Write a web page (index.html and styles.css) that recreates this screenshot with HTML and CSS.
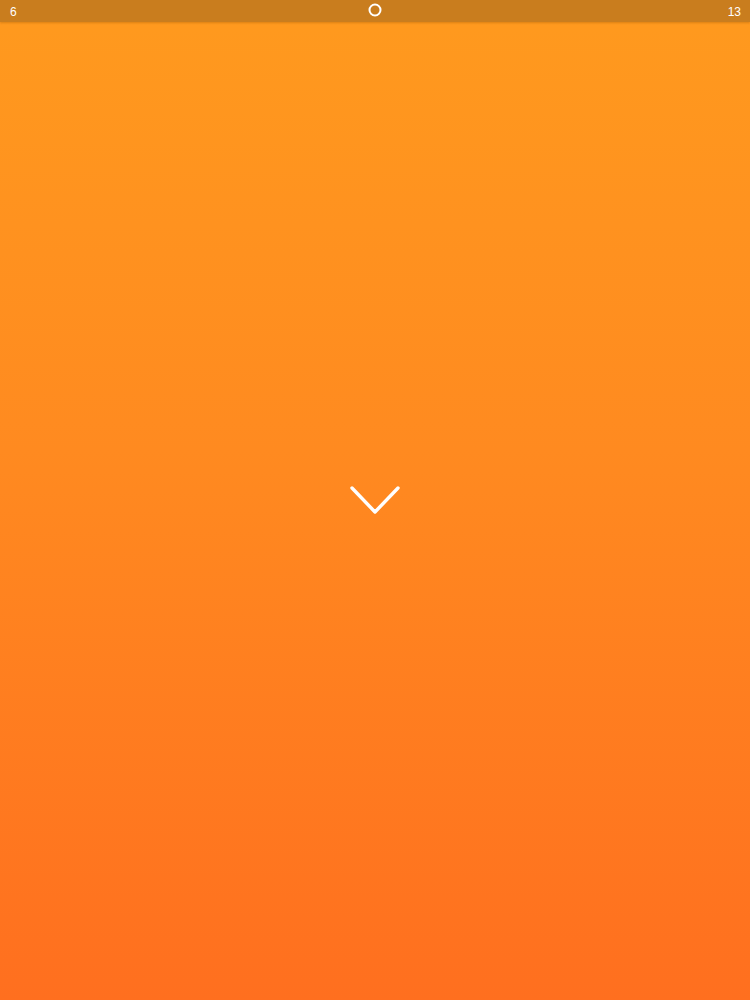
FILE: index.html
```html
<!DOCTYPE html>
<html>
<head>
<meta charset="utf-8">
<link rel="stylesheet" href="styles.css">
</head>
<body>
<div class="screen">
  <div class="statusbar">
    <span class="left">6</span>
    <svg class="ring" width="14" height="14" viewBox="0 0 14 14"><circle cx="7" cy="7" r="5.5" fill="none" stroke="#fff" stroke-width="2"/></svg>
    <span class="right">13</span>
  </div>
  <div class="main">
    <svg class="chevron" width="52" height="32" viewBox="0 0 52 32"><polyline points="3,3 26,27 49,3" fill="none" stroke="#fff" stroke-width="3.4" stroke-linecap="round" stroke-linejoin="round"/></svg>
  </div>
</div>
</body>
</html>
```
FILE: styles.css
```css
html, body { margin: 0; padding: 0; }
body { width: 750px; height: 1000px; overflow: hidden; font-family: "Liberation Sans", Arial, sans-serif; }
.screen { width: 750px; height: 1000px; display: flex; flex-direction: column; background: linear-gradient(to bottom, #ff9a1e 0%, #ff8a20 45%, #ff6f1f 100%); }
.statusbar { height: 22px; background: #c97d1e; display: flex; align-items: center; justify-content: space-between; padding: 0 9px 0 10px; color: #fff; font-size: 12px; position: relative; box-shadow: 0 1px 2px rgba(150,80,0,0.35); }
.statusbar .left, .statusbar .right { line-height: 22px; padding-top: 1px; }
.ring { position: absolute; left: 368px; top: 3px; }
.main { flex: 1; display: flex; justify-content: center; align-items: center; padding-bottom: 20px; }
.chevron { display: block; }
```
